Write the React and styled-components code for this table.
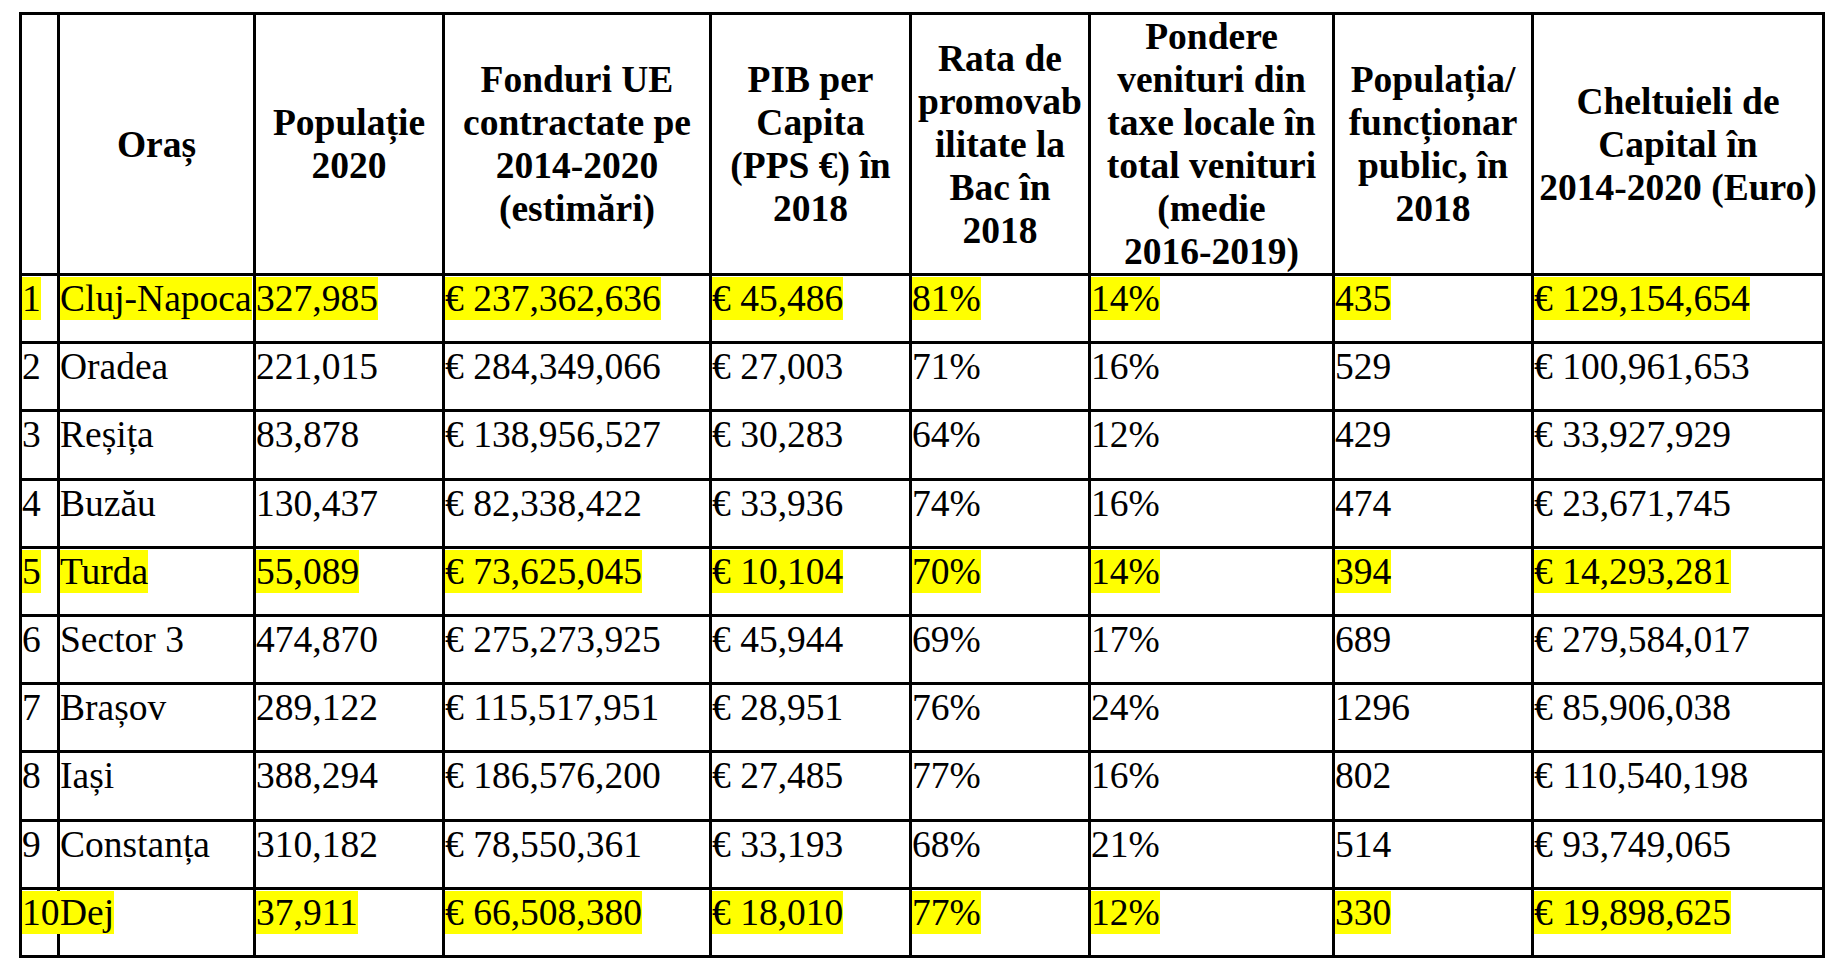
import React from 'react';
import styled, { createGlobalStyle } from 'styled-components';

const GlobalStyle = createGlobalStyle`
    html, body {
        margin: 0;
        padding: 0;
        background: #fff;
    }
    body {
        font-family: "Liberation Serif", "Times New Roman", serif;
        color: #000;
    }
`;

const Page = styled.div`
    padding: 12px 0 0 19px;
`;

const Table = styled.table`
    width: 1806px;
    border-collapse: collapse;
    table-layout: fixed;
    border: 3px solid #000;
    font-size: 37.5px;
`;

const HeadCell = styled.th`
    border: 3px solid #000;
    padding: 0;
    height: 258px;
    font-weight: bold;
    line-height: 43px;
    text-align: center;
    vertical-align: middle;
    white-space: nowrap;
`;

const Row = styled.tr`
    height: 68.2px;
`;

const Cell = styled.td`
    border: 3px solid #000;
    padding: 1px 0 0 0;
    vertical-align: top;
    white-space: nowrap;
    overflow: visible;
`;

const Value = styled.span`
    display: inline-block;
    line-height: normal;
    background: ${p => (p.$marked ? '#ffff00' : 'transparent')};
`;

const widths = [38, 196, 189, 267, 200, 179, 244, 199, 291];

const headers = [
    [],
    ['Oraș'],
    ['Populație', '2020'],
    ['Fonduri UE', 'contractate pe', '2014-2020', '(estimări)'],
    ['PIB per', 'Capita', '(PPS €) în', '2018'],
    ['Rata de', 'promovab', 'ilitate la', 'Bac în', '2018'],
    ['Pondere', 'venituri din', 'taxe locale în', 'total venituri', '(medie', '2016-2019)'],
    ['Populația/', 'funcționar', 'public, în', '2018'],
    ['Cheltuieli de', 'Capital în', '2014-2020 (Euro)'],
];

const rows = [
    { marked: true, cells: ['1', 'Cluj-Napoca', '327,985', '€ 237,362,636', '€ 45,486', '81%', '14%', '435', '€ 129,154,654'] },
    { cells: ['2', 'Oradea', '221,015', '€ 284,349,066', '€ 27,003', '71%', '16%', '529', '€ 100,961,653'] },
    { cells: ['3', 'Reșița', '83,878', '€ 138,956,527', '€ 30,283', '64%', '12%', '429', '€ 33,927,929'] },
    { cells: ['4', 'Buzău', '130,437', '€ 82,338,422', '€ 33,936', '74%', '16%', '474', '€ 23,671,745'] },
    { marked: true, cells: ['5', 'Turda', '55,089', '€ 73,625,045', '€ 10,104', '70%', '14%', '394', '€ 14,293,281'] },
    { cells: ['6', 'Sector 3', '474,870', '€ 275,273,925', '€ 45,944', '69%', '17%', '689', '€ 279,584,017'] },
    { cells: ['7', 'Brașov', '289,122', '€ 115,517,951', '€ 28,951', '76%', '24%', '1296', '€ 85,906,038'] },
    { cells: ['8', 'Iași', '388,294', '€ 186,576,200', '€ 27,485', '77%', '16%', '802', '€ 110,540,198'] },
    { cells: ['9', 'Constanța', '310,182', '€ 78,550,361', '€ 33,193', '68%', '21%', '514', '€ 93,749,065'] },
    { marked: true, cells: ['10', 'Dej', '37,911', '€ 66,508,380', '€ 18,010', '77%', '12%', '330', '€ 19,898,625'] },
];

const App = () => {
    return (
        <Page>
            <GlobalStyle />
            <Table>
                <colgroup>
                    {widths.map((w, i) => (
                        <col key={i} style={{ width: w }} />
                    ))}
                </colgroup>
                <thead>
                    <tr>
                        {headers.map((lines, i) => (
                            <HeadCell key={i}>
                                {lines.map((line, j) => (
                                    <React.Fragment key={j}>
                                        {j > 0 && <br />}
                                        {line}
                                    </React.Fragment>
                                ))}
                            </HeadCell>
                        ))}
                    </tr>
                </thead>
                <tbody>
                    {rows.map((row, r) => (
                        <Row key={r}>
                            {row.cells.map((text, c) => (
                                <Cell key={c}>
                                    <Value $marked={row.marked}>{text}</Value>
                                </Cell>
                            ))}
                        </Row>
                    ))}
                </tbody>
            </Table>
        </Page>
    );
};

export default App;
